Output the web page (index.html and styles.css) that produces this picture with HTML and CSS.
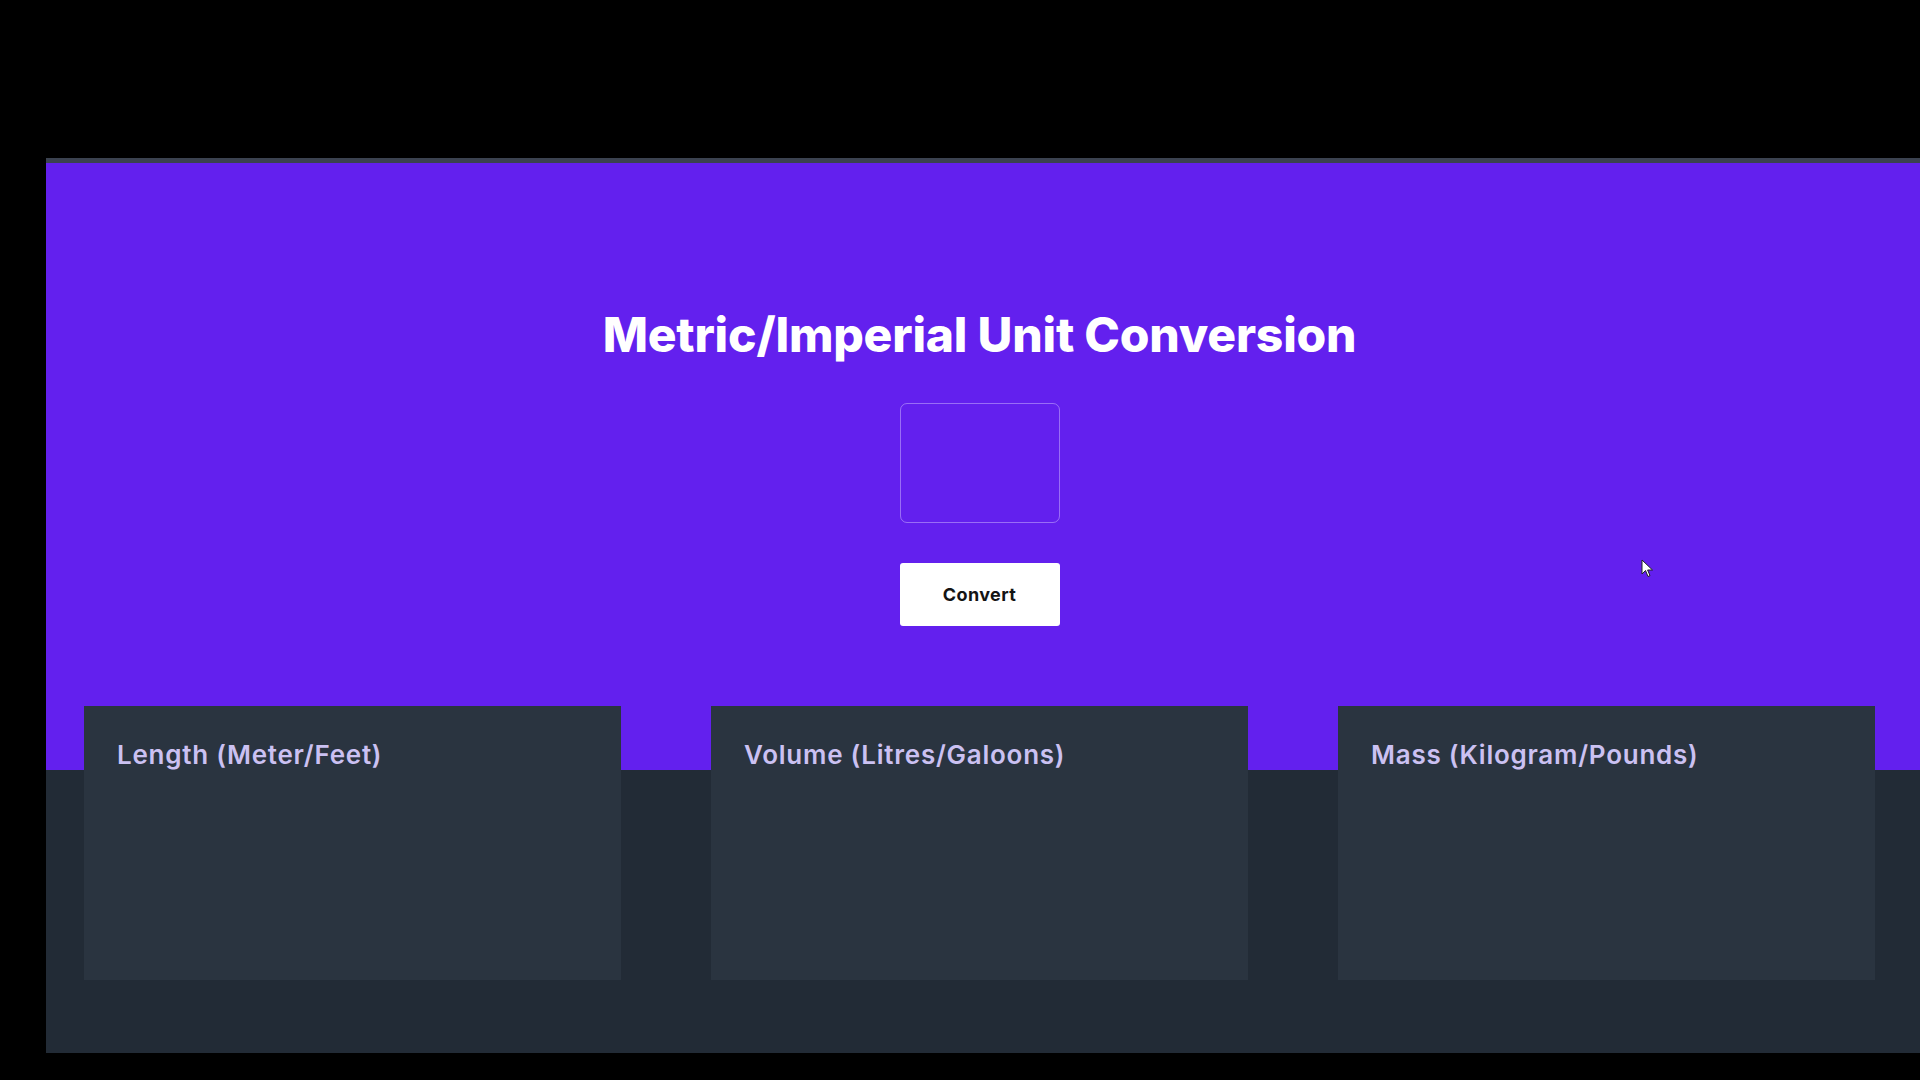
FILE: index.html
```html
<!DOCTYPE html>
<html lang="en">
<head>
<meta charset="utf-8">
<title>Metric/Imperial Unit Conversion</title>
<link rel="stylesheet" href="styles.css">
</head>
<body>
<div class="frame">
  <div class="strip"></div>
  <main class="app">
    <h1 class="title">Metric/Imperial Unit Conversion</h1>
    <input class="value-input" type="text" aria-label="Value">
    <button class="convert-btn" type="button">Convert</button>
    <section class="cards">
      <div class="card"><h2 class="card-title">Length (Meter/Feet)</h2></div>
      <div class="card"><h2 class="card-title">Volume (Litres/Galoons)</h2></div>
      <div class="card"><h2 class="card-title">Mass (Kilogram/Pounds)</h2></div>
    </section>
    <svg class="cursor" width="14" height="20" viewBox="0 0 14 20" aria-hidden="true">
      <path d="M1 1 L1 15 L4.5 11.5 L7 17.5 L9 16.6 L6.6 11 L11.5 11 Z" fill="#ffffff" stroke="#222" stroke-width="1"/>
    </svg>
  </main>
</div>
</body>
</html>
```
FILE: styles.css
```css
html, body {
  margin: 0;
  padding: 0;
  background: #000000;
}
body {
  width: 1920px;
  height: 1080px;
  overflow: hidden;
  font-family: Inter, "Noto Sans", sans-serif;
}
.frame {
  padding-top: 158px;
  padding-left: 46px;
}
.strip {
  height: 5px;
  background: #3b4250;
}
.app {
  position: relative;
  height: 890px;
  box-sizing: border-box;
  padding: 0 45px 0 38px;
  display: flex;
  flex-direction: column;
  align-items: center;
  background: linear-gradient(to bottom, #6320ee 0, #6320ee 607px, #222b36 607px, #222b36 100%);
}
.title {
  margin: 143px 0 0 0;
  font-size: 48px;
  line-height: 58px;
  font-weight: 800;
  color: #ffffff;
  letter-spacing: -0.2px;
}
.value-input {
  margin-top: 39px;
  width: 160px;
  height: 120px;
  box-sizing: border-box;
  border: 1.5px solid rgba(220, 205, 255, 0.45);
  border-radius: 7px;
  background: transparent;
  outline: none;
}
.convert-btn {
  margin-top: 40px;
  width: 160px;
  height: 63px;
  border: none;
  border-radius: 3px;
  background: #ffffff;
  color: #141414;
  font-family: Inter, "Noto Sans", sans-serif;
  font-size: 18px;
  font-weight: 700;
  letter-spacing: 0.4px;
}
.cards {
  margin-top: 80px;
  width: 100%;
  display: flex;
  justify-content: space-between;
}
.card {
  width: 537px;
  height: 274px;
  box-sizing: border-box;
  padding: 32px 33px;
  background: #2a3440;
}
.card-title {
  margin: 0;
  font-size: 26px;
  line-height: 34px;
  font-weight: 600;
  color: #cbc1f2;
  letter-spacing: 0.75px;
}
.cursor {
  position: absolute;
  left: 1595px;
  top: 396px;
}
```
